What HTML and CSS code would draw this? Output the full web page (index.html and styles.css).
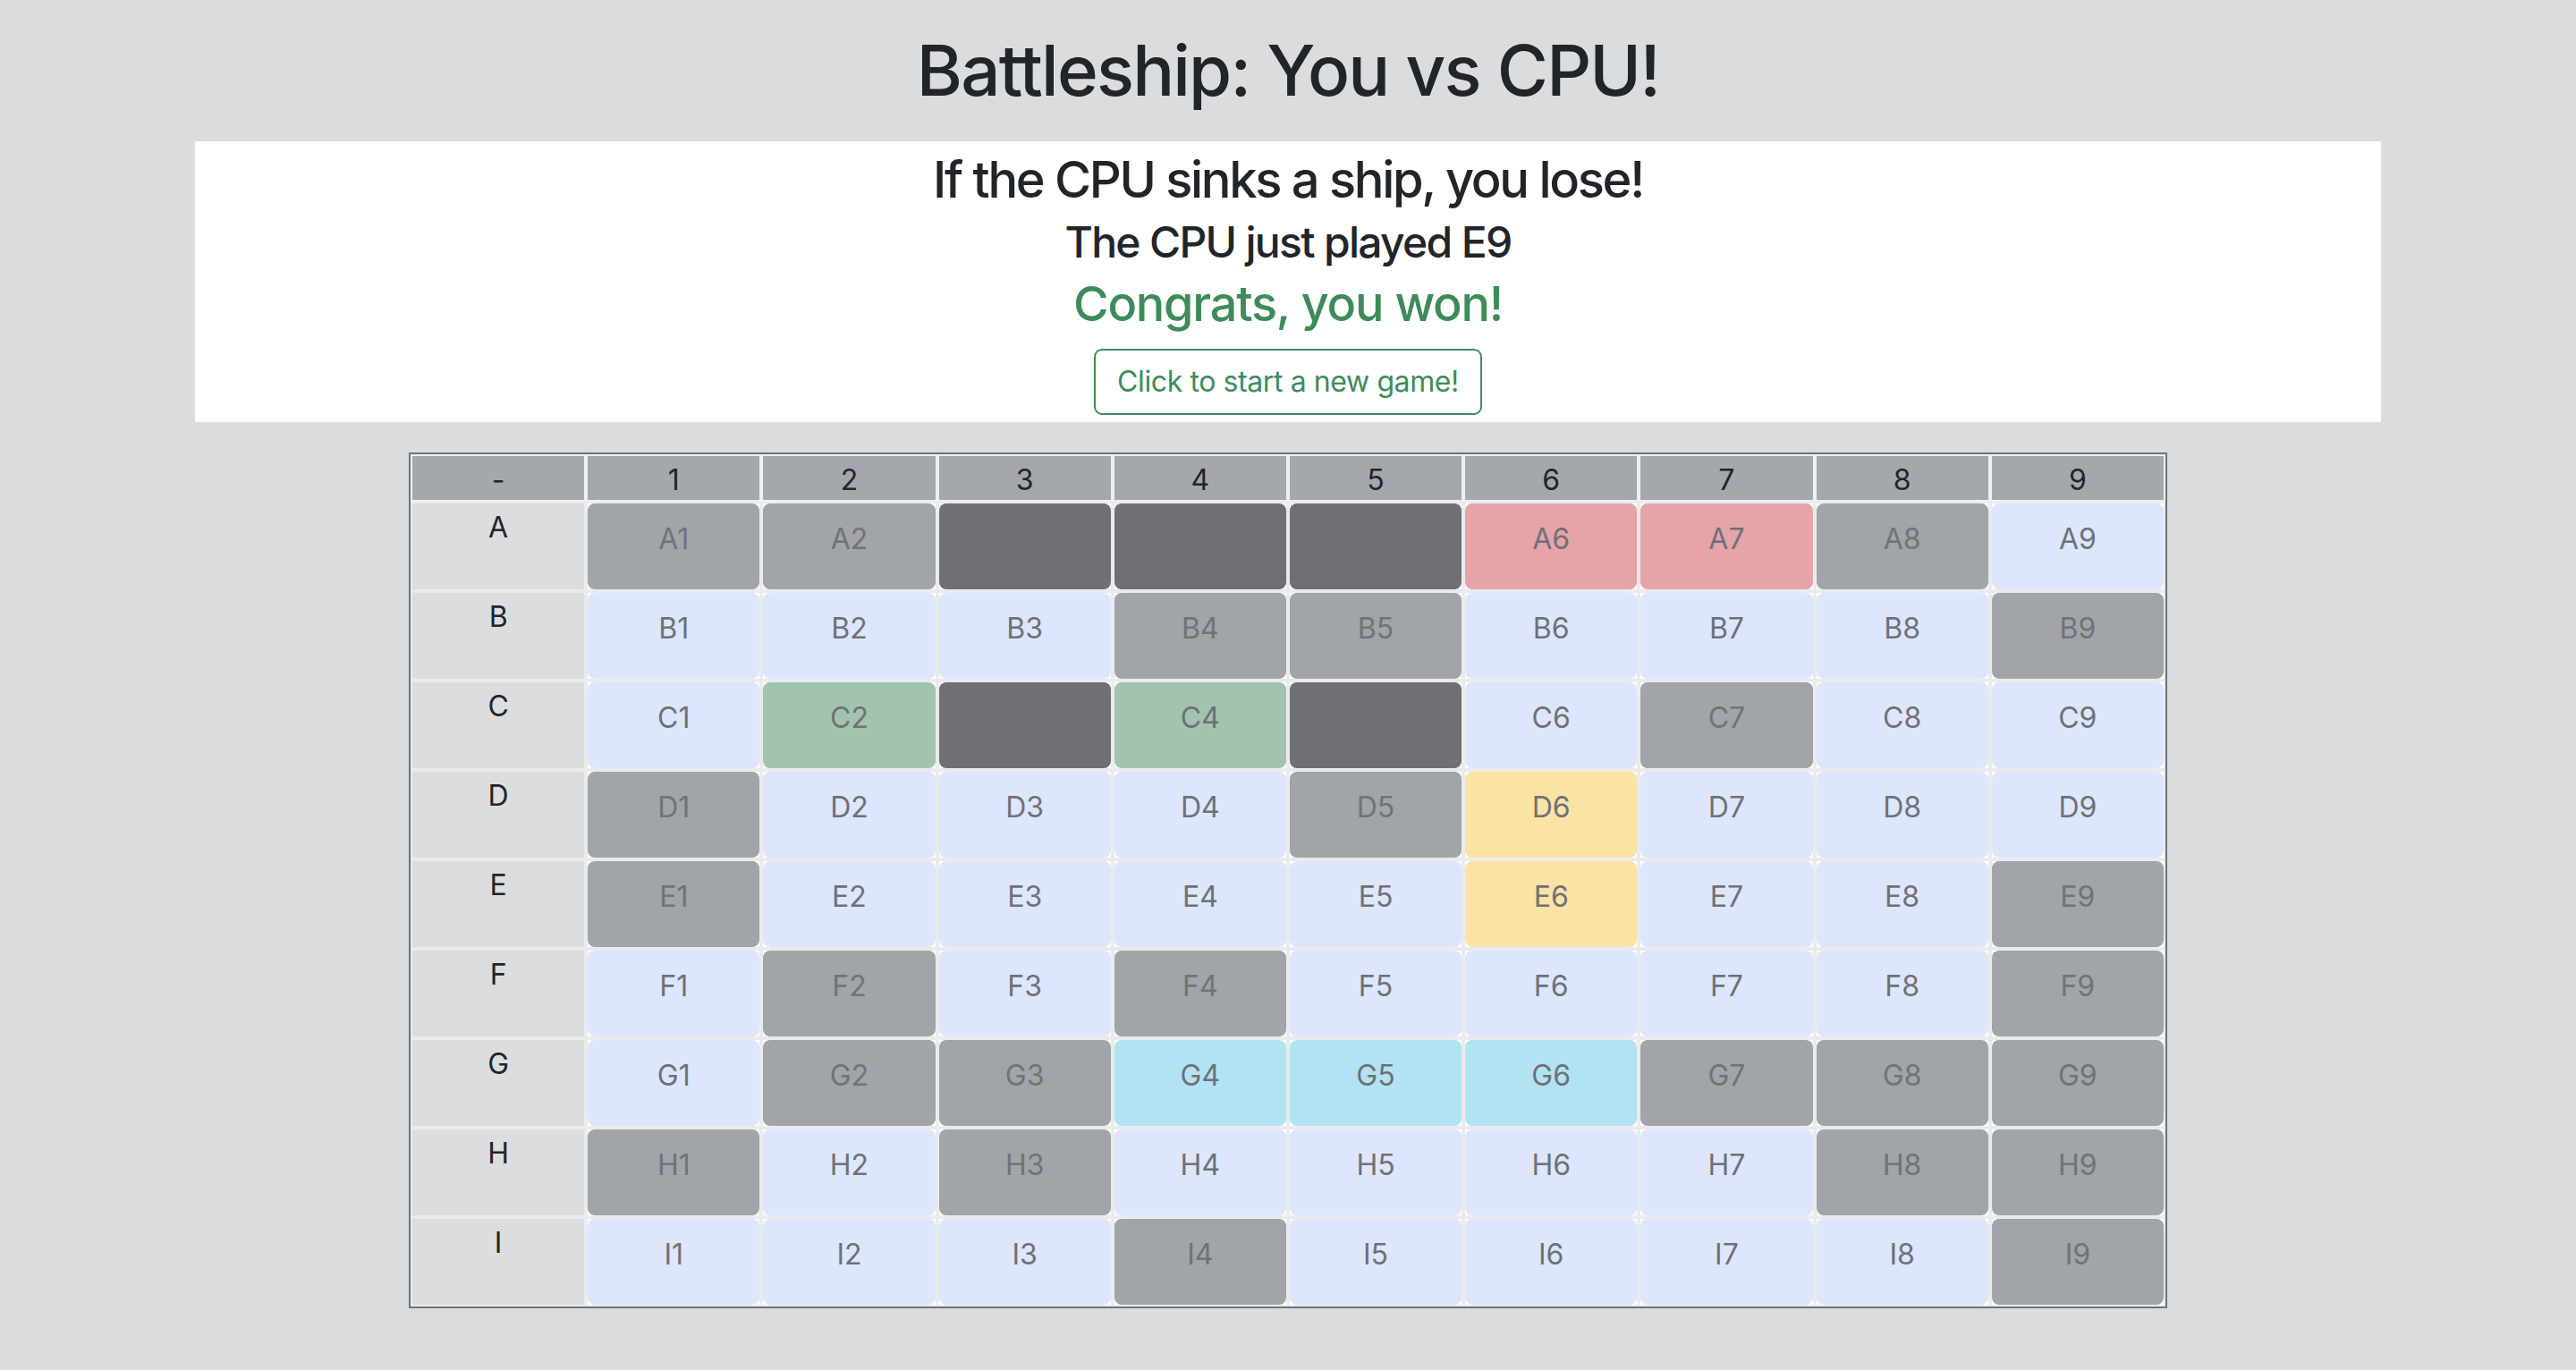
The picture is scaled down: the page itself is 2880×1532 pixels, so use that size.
FILE: index.html
```html
<!DOCTYPE html>
<html lang="en">
<head>
<meta charset="utf-8">
<title>Battleship: You vs CPU!</title>
<link rel="stylesheet" href="styles.css">
</head>
<body>
<h1 class="title">Battleship: You vs CPU!</h1>
<section class="status">
  <h3 class="status-rule">If the CPU sinks a ship, you lose!</h3>
  <h4 class="status-move">The CPU just played E9</h4>
  <h3 class="status-win">Congrats, you won!</h3>
  <button class="btn-new">Click to start a new game!</button>
</section>
<table class="board">
  <thead>
    <tr><th>-</th><th>1</th><th>2</th><th>3</th><th>4</th><th>5</th><th>6</th><th>7</th><th>8</th><th>9</th></tr>
  </thead>
  <tbody>
    <tr><th>A</th>
      <td><div class="c gray">A1</div></td><td><div class="c gray">A2</div></td><td><div class="c dark"></div></td><td><div class="c dark"></div></td><td><div class="c dark"></div></td><td><div class="c red">A6</div></td><td><div class="c red">A7</div></td><td><div class="c gray">A8</div></td><td><div class="c blue">A9</div></td></tr>
    <tr><th>B</th>
      <td><div class="c blue">B1</div></td><td><div class="c blue">B2</div></td><td><div class="c blue">B3</div></td><td><div class="c gray">B4</div></td><td><div class="c gray">B5</div></td><td><div class="c blue">B6</div></td><td><div class="c blue">B7</div></td><td><div class="c blue">B8</div></td><td><div class="c gray">B9</div></td></tr>
    <tr><th>C</th>
      <td><div class="c blue">C1</div></td><td><div class="c green">C2</div></td><td><div class="c dark"></div></td><td><div class="c green">C4</div></td><td><div class="c dark"></div></td><td><div class="c blue">C6</div></td><td><div class="c gray">C7</div></td><td><div class="c blue">C8</div></td><td><div class="c blue">C9</div></td></tr>
    <tr><th>D</th>
      <td><div class="c gray">D1</div></td><td><div class="c blue">D2</div></td><td><div class="c blue">D3</div></td><td><div class="c blue">D4</div></td><td><div class="c gray">D5</div></td><td><div class="c yellow">D6</div></td><td><div class="c blue">D7</div></td><td><div class="c blue">D8</div></td><td><div class="c blue">D9</div></td></tr>
    <tr><th>E</th>
      <td><div class="c gray">E1</div></td><td><div class="c blue">E2</div></td><td><div class="c blue">E3</div></td><td><div class="c blue">E4</div></td><td><div class="c blue">E5</div></td><td><div class="c yellow">E6</div></td><td><div class="c blue">E7</div></td><td><div class="c blue">E8</div></td><td><div class="c gray">E9</div></td></tr>
    <tr><th>F</th>
      <td><div class="c blue">F1</div></td><td><div class="c gray">F2</div></td><td><div class="c blue">F3</div></td><td><div class="c gray">F4</div></td><td><div class="c blue">F5</div></td><td><div class="c blue">F6</div></td><td><div class="c blue">F7</div></td><td><div class="c blue">F8</div></td><td><div class="c gray">F9</div></td></tr>
    <tr><th>G</th>
      <td><div class="c blue">G1</div></td><td><div class="c gray">G2</div></td><td><div class="c gray">G3</div></td><td><div class="c cyan">G4</div></td><td><div class="c cyan">G5</div></td><td><div class="c cyan">G6</div></td><td><div class="c gray">G7</div></td><td><div class="c gray">G8</div></td><td><div class="c gray">G9</div></td></tr>
    <tr><th>H</th>
      <td><div class="c gray">H1</div></td><td><div class="c blue">H2</div></td><td><div class="c gray">H3</div></td><td><div class="c blue">H4</div></td><td><div class="c blue">H5</div></td><td><div class="c blue">H6</div></td><td><div class="c blue">H7</div></td><td><div class="c gray">H8</div></td><td><div class="c gray">H9</div></td></tr>
    <tr><th>I</th>
      <td><div class="c blue">I1</div></td><td><div class="c blue">I2</div></td><td><div class="c blue">I3</div></td><td><div class="c gray">I4</div></td><td><div class="c blue">I5</div></td><td><div class="c blue">I6</div></td><td><div class="c blue">I7</div></td><td><div class="c blue">I8</div></td><td><div class="c gray">I9</div></td></tr>
  </tbody>
</table>
</body>
</html>
```
FILE: styles.css
```css
html, body {
  margin: 0;
  padding: 0;
}
body {
  background: #dbdcde;
  font-family: Inter, "Noto Sans", "Liberation Sans", sans-serif;
  color: #212529;
  font-size: 32px;
  line-height: 1.5;
  height: 1532px;
  box-sizing: border-box;
  overflow: hidden;
}
.title {
  margin: 0;
  padding-top: 32px;
  margin-bottom: 32px;
  font-size: 78px;
  font-weight: 500;
  line-height: 1.2;
  text-align: center;
  letter-spacing: -1.8px;
}
.status {
  width: 2444px;
  margin: 0 auto;
  background: #ffffff;
  box-sizing: border-box;
  padding: 10px 0 8px;
  display: flex;
  flex-direction: column;
  align-items: center;
  text-align: center;
}
.status h3, .status h4 {
  margin: 0;
  font-weight: 500;
  line-height: 1.2;
}
.status-rule {
  font-size: 56px;
  letter-spacing: -2.3px;
}
.status-move {
  font-size: 48px;
  margin-top: 7px !important;
  letter-spacing: -1.7px;
}
.status-win {
  font-size: 54px;
  color: #3d8b5a;
  margin-top: 9px !important;
  letter-spacing: -1.2px;
}
.btn-new {
  margin-top: 17px;
  font-family: inherit;
  font-size: 32px;
  line-height: 46px;
  padding: 12px 24px;
  color: #3d8b5a;
  background: #ffffff;
  border: 2px solid #3d8b5a;
  border-radius: 9px;
  letter-spacing: -0.4px;
}
.board {
  margin: 34px auto 0;
  width: 1966px;
  table-layout: fixed;
  border-collapse: separate;
  border-spacing: 0;
  border: 2px solid #6c737b;
  background: #ffffff;
}
.board th, .board td {
  border: 2px solid #eaebed;
  padding: 0;
  text-align: center;
  vertical-align: top;
  font-weight: 400;
}
.board thead th {
  background: #a4a8ac;
  line-height: 44px;
  padding-top: 5px;
  height: 44px;
  border-color: #eef0f2;
  color: #212529;
}
.board tbody th {
  background: #dcdddf;
  height: 91px;
  padding-top: 5px;
  line-height: 44px;
  color: #212529;
}
.board td {
  background: #ffffff;
  height: 96px;
}
.c {
  height: 96px;
  box-sizing: border-box;
  padding-top: 16px;
  line-height: 48px;
  border-radius: 8px;
  color: #6e7177;
}
.gray { background: #a1a4a8; color: #707378; }
.dark { background: #6f7074; }
.red { background: #e6a4a6; }
.green { background: #a2c4af; }
.yellow { background: #fbe2a5; }
.cyan { background: #b1e3f3; }
.blue { background: #dde6fc; }
```
